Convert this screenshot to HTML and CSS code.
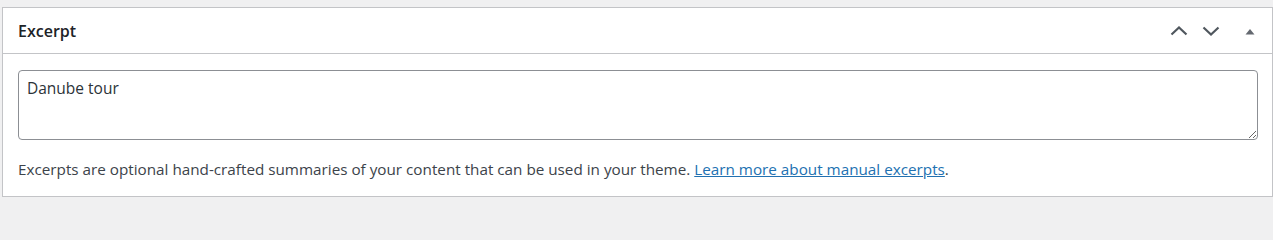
FILE: index.html
```html
<!DOCTYPE html>
<html lang="en">
<head>
<meta charset="utf-8">
<title>Excerpt</title>
<link rel="stylesheet" href="styles.css">
</head>
<body>
<div class="postbox">
  <div class="postbox-header">
    <h2 class="hndle">Excerpt</h2>
    <div class="handle-actions">
      <button class="handle-btn order" type="button" aria-label="Move up">
        <svg width="18" height="10" viewBox="0 0 18 10"><polyline points="1.5,8.5 9,1.5 16.5,8.5" fill="none" stroke="#50575e" stroke-width="2.2"/></svg>
      </button>
      <button class="handle-btn order" type="button" aria-label="Move down">
        <svg width="18" height="10" viewBox="0 0 18 10"><polyline points="1.5,1.5 9,8.5 16.5,1.5" fill="none" stroke="#50575e" stroke-width="2.2"/></svg>
      </button>
      <button class="handle-btn toggle" type="button" aria-label="Toggle panel">
        <svg width="10" height="7" viewBox="0 0 10 7"><polygon points="0.5,6.5 5,1 9.5,6.5" fill="#646970"/></svg>
      </button>
    </div>
  </div>
  <div class="inside">
    <textarea class="excerpt" rows="1">Danube tour</textarea>
    <p class="desc">Excerpts are optional hand-crafted summaries of your content that can be used in your theme. <a href="#">Learn more about manual excerpts</a>.</p>
  </div>
</div>
</body>
</html>
```

FILE: styles.css
```css
html, body {
  margin: 0;
  padding: 0;
  background: #f0f0f1;
  font-family: "Open Sans", "Noto Sans", sans-serif;
  color: #1d2327;
}
.postbox {
  margin: 7px 0 5px 2px;
  width: 1269px;
  border: 1px solid #c3c4c7;
  background: #fff;
}
.postbox-header {
  display: flex;
  align-items: center;
  justify-content: space-between;
  height: 45px;
  border-bottom: 1px solid #c3c4c7;
}
.hndle {
  margin: 0;
  padding: 2px 0 0 15px;
  font-size: 16px;
  font-weight: 600;
  line-height: 1.4;
  color: #1d2327;
}
.handle-actions {
  display: flex;
  align-items: center;
  height: 100%;
}
.handle-btn {
  display: flex;
  align-items: center;
  justify-content: center;
  box-sizing: border-box;
  height: 100%;
  padding: 0;
  margin: 0;
  border: 0;
  background: transparent;
  cursor: pointer;
}
.handle-btn.order {
  width: 32px;
}
.handle-btn.toggle {
  width: 45px;
  padding: 1px 0 0 1px;
}
.inside {
  padding: 16px 14px 16px 15px;
}
.excerpt {
  display: block;
  box-sizing: border-box;
  width: 100%;
  height: 70px;
  margin: 0;
  padding: 7px 8px 5px;
  border: 1px solid #8c8f94;
  border-radius: 4px;
  font-family: "Open Sans", "Noto Sans", sans-serif;
  font-size: 15.5px;
  line-height: 1.4;
  color: #2c3338;
  resize: vertical;
}
.desc {
  margin: 18px 0 0;
  font-size: 15.25px;
  line-height: 22px;
  color: #3c434a;
}
.desc a {
  color: #2271b1;
  text-decoration: underline;
}
```
